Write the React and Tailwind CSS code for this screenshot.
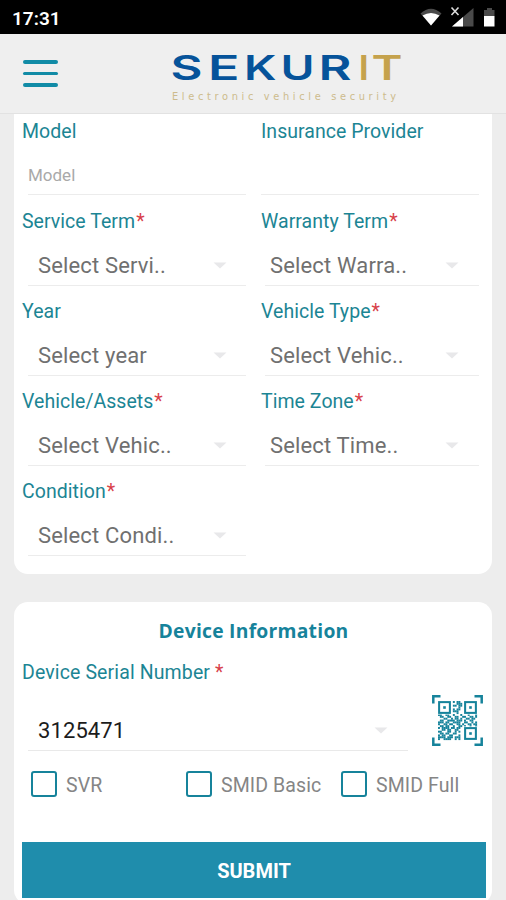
import { useState } from 'react';

const FIELDS = [
  { id: 'model', label: 'Model', type: 'text', placeholder: 'Model' },
  { id: 'insurance', label: 'Insurance Provider', type: 'text', placeholder: '' },
  { id: 'service', label: 'Service Term', required: true, value: 'Select Servi..' },
  { id: 'warranty', label: 'Warranty Term', required: true, value: 'Select Warra..' },
  { id: 'year', label: 'Year', value: 'Select year' },
  { id: 'vehicleType', label: 'Vehicle Type', required: true, value: 'Select Vehic..' },
  { id: 'assets', label: 'Vehicle/Assets', required: true, value: 'Select Vehic..' },
  { id: 'timeZone', label: 'Time Zone', required: true, value: 'Select Time..' },
  { id: 'condition', label: 'Condition', required: true, value: 'Select Condi..' },
];

const DEVICE_TYPES = ['SVR', 'SMID Basic', 'SMID Full'];

// x = left edge, w = advance width of each stretched letter
const LOGO_LETTERS = [
  { char: 'S', x: 170.5, w: 32, color: '#06539a' },
  { char: 'E', x: 208, w: 31.5, color: '#06539a' },
  { char: 'K', x: 244, w: 32.5, color: '#06539a' },
  { char: 'U', x: 280.5, w: 34, color: '#06539a' },
  { char: 'R', x: 318.5, w: 33, color: '#06539a' },
  { char: 'I', x: 358.5, w: 10.5, color: '#c5a24c' },
  { char: 'T', x: 371.5, w: 31, color: '#c5a24c' },
];

// QR data modules, finder squares are drawn on top
const QR_ROWS = [
  '........#.##.........',
  '..........###........',
  '........##.##........',
  '...........#.........',
  '........#.##.........',
  '........###..........',
  '..........#..........',
  '##..##..#...#...#...#',
  '.##..##..##..##..##.#',
  '...##..#.##.#..##.##.',
  '.##..####.###.#..##..',
  '###.##..####..##..#.#',
  '#..##.##..##.#..##.##',
  '.##.##..#..##.#..#..#',
  '#.####.##.##.........',
  '..##.##..##..........',
  '##...##..#.#.........',
  '.##.##..##...........',
  '#.##..##...#.........',
  '####.###.###.........',
  '#..####..#.#.........',
];

function StatusBar() {
  return (
    <div className="flex h-[34px] items-center justify-between bg-black pl-3 pr-2.5 text-white">
      <span className="pt-0.5 text-[19px] font-semibold leading-none">17:31</span>
      <svg width="76" height="24" viewBox="420 5 76 24">
        <path d="M420.5 13.5 Q431 4 441.5 13.5 L431 25.5 Z" fill="#4a4a4a" />
        <path d="M422.5 15.6 Q431 10.5 439.5 15.6 L431 25.5 Z" fill="#fff" />
        <path d="M473.5 8 V26.5 H452 Z" fill="#4a4a4a" />
        <path d="M463 17 V26.5 H452 Z" fill="#fff" />
        <path d="M451.5 7.5 L458.5 15 M458.5 7.5 L451.5 15" stroke="#ddd" strokeWidth="1.6" />
        <path d="M484 10 H487 V8 H492 V10 H494.5 V16 H484 Z" fill="#4a4a4a" />
        <path d="M484 16 H494.5 V26.5 H484 Z" fill="#fff" />
      </svg>
    </div>
  );
}

function Logo() {
  return (
    <svg width="240" height="70" viewBox="168 40 240 70" fontFamily="Inter, sans-serif">
      {LOGO_LETTERS.map((l) => (
        <text key={l.char} x={l.x} y="80" fontSize="33.5" fontWeight="600" textLength={l.w} lengthAdjust="spacingAndGlyphs" fill={l.color}>
          {l.char}
        </text>
      ))}
      <text x="172" y="99.5" fontSize="9.8" fontFamily="DejaVu Sans, sans-serif" textLength="224" fill="#cdbb8c">
        Electronic vehicle security
      </text>
    </svg>
  );
}

function Header() {
  return (
    <header className="flex h-20 items-center border-b border-[#e2e2e2] bg-[#efefef] pl-[23px]">
      <button className="flex w-[35px] flex-col gap-2" aria-label="Menu">
        <span className="h-[3.5px] rounded-full bg-[#118ba6]" />
        <span className="h-[3.5px] rounded-full bg-[#118ba6]" />
        <span className="h-[3.5px] rounded-full bg-[#118ba6]" />
      </button>
      <div className="ml-[110px] mt-0.5">
        <Logo />
      </div>
    </header>
  );
}

function Label({ text, required }) {
  return (
    <div className="h-7 whitespace-nowrap pt-px text-[19.5px] leading-7 tracking-[0.04px] text-[#1c8594]">
      {text}
      {required && <span className="ml-px text-[#d8414a]">*</span>}
    </div>
  );
}

function Caret() {
  return (
    <svg width="14" height="7" viewBox="0 0 14 7">
      <path d="M0.5 0.5 H13.5 L7 6.5 Z" fill="#e8e8ea" />
    </svg>
  );
}

function Field({ field, right }) {
  return (
    <div className="h-[90px]">
      <Label text={field.label} required={field.required} />
      {field.type === 'text' ? (
        <div className={`flex h-[50px] w-[218px] items-center border-b border-[#ececec] pt-3 text-[17px] text-[#a9a9a9] ${right ? '' : 'ml-1.5'}`}>
          {field.placeholder}
        </div>
      ) : (
        <div className={`flex h-[51px] items-center justify-between border-b border-[#ececec] pt-2.5 text-[22px] tracking-[0.15px] text-[#707070] ${right ? 'ml-1 w-[214px] pl-[5px] pr-5' : 'ml-1.5 w-[218px] pl-2.5 pr-[19px]'}`}>
          <span>{field.value}</span>
          <Caret />
        </div>
      )}
    </div>
  );
}

function Finder({ x, y }) {
  return (
    <g>
      <rect x={x - 0.3} y={y - 0.3} width="7.6" height="7.6" fill="#fff" />
      <rect x={x + 0.6} y={y + 0.6} width="5.8" height="5.8" fill="none" stroke="#16839b" strokeWidth="1.1" />
      <rect x={x + 2.8} y={y + 2.8} width="1.4" height="1.4" fill="#16839b" />
    </g>
  );
}

function QrIcon() {
  return (
    <svg width="51" height="51" viewBox="0 0 51 51">
      <path d="M1.3 8.5 V1.3 H8.5 M42.5 1.3 H49.7 V8.5 M49.7 42.5 V49.7 H42.5 M8.5 49.7 H1.3 V42.5" fill="none" stroke="#16839b" strokeWidth="2.5" />
      <g transform="translate(6 6) scale(1.857)">
        {QR_ROWS.map((row, y) =>
          row.split('').map((c, x) => (c === '#' ? <rect key={`${x}-${y}`} x={x} y={y} width="1.05" height="1.05" fill="#16839b" /> : null))
        )}
        <Finder x={0} y={0} />
        <Finder x={14} y={0} />
        <Finder x={14} y={14} />
      </g>
    </svg>
  );
}

function Checkbox({ label, checked, onChange }) {
  return (
    <button className="flex w-[155px] shrink-0 items-center gap-[9px] text-[19.5px] leading-none text-[#858585]" onClick={onChange}>
      <span className={`size-[26px] shrink-0 rounded-[3px] border-2 border-[#16839b] ${checked ? 'bg-[#16839b]' : 'bg-white'}`} />
      <span className="whitespace-nowrap pt-[3px] tracking-[0.1px]">{label}</span>
    </button>
  );
}

export default function App() {
  const [selected, setSelected] = useState(null);

  return (
    <div className="h-[900px] w-[506px] overflow-hidden bg-[#ededed] font-['Roboto',sans-serif]">
      <StatusBar />
      <Header />

      <main className="px-3.5">
        {/* Vehicle details */}
        <section className="grid h-[460px] grid-cols-[239px_1fr] content-start rounded-b-[14px] bg-white pl-2 pt-[3px]">
          {FIELDS.map((field, i) => (
            <Field key={field.id} field={field} right={i % 2 === 1} />
          ))}
        </section>

        {/* Device information */}
        <section className="mt-7 h-[302px] rounded-[14px] bg-white px-2 pt-3.5">
          <h2 className="h-7 pl-px pt-px text-center font-['Open_Sans',sans-serif] text-[19.3px] font-bold leading-7 tracking-[0.25px] text-[#16839b]">
            Device Information
          </h2>
          <div className="mt-3.5 flex justify-between">
            <div>
              <div className="h-7 pt-px text-[19.5px] leading-7 tracking-[0.12px] text-[#1c8594]">
                Device Serial Number <span className="text-[#d8414a]">*</span>
              </div>
              <div className="ml-1.5 mt-3.5 flex h-[51px] w-[380px] items-center justify-between border-b border-[#e9e9e9] pl-2.5 pr-5 pt-2.5 text-[22px] tracking-[0.1px] text-[#1c1c1c]">
                <span>3125471</span>
                <Caret />
              </div>
            </div>
            <div className="mr-px mt-[37px]">
              <QrIcon />
            </div>
          </div>

          <div className="mt-5 flex pl-[9px]">
            {DEVICE_TYPES.map((type) => (
              <Checkbox
                key={type}
                label={type}
                checked={selected === type}
                onChange={() => setSelected(selected === type ? null : type)}
              />
            ))}
          </div>

          <button className="mt-[45px] flex h-14 w-[464px] items-center justify-center bg-[#1f8dac] pt-0.5 text-[20px] font-bold text-white">
            SUBMIT
          </button>
        </section>
      </main>
    </div>
  );
}
